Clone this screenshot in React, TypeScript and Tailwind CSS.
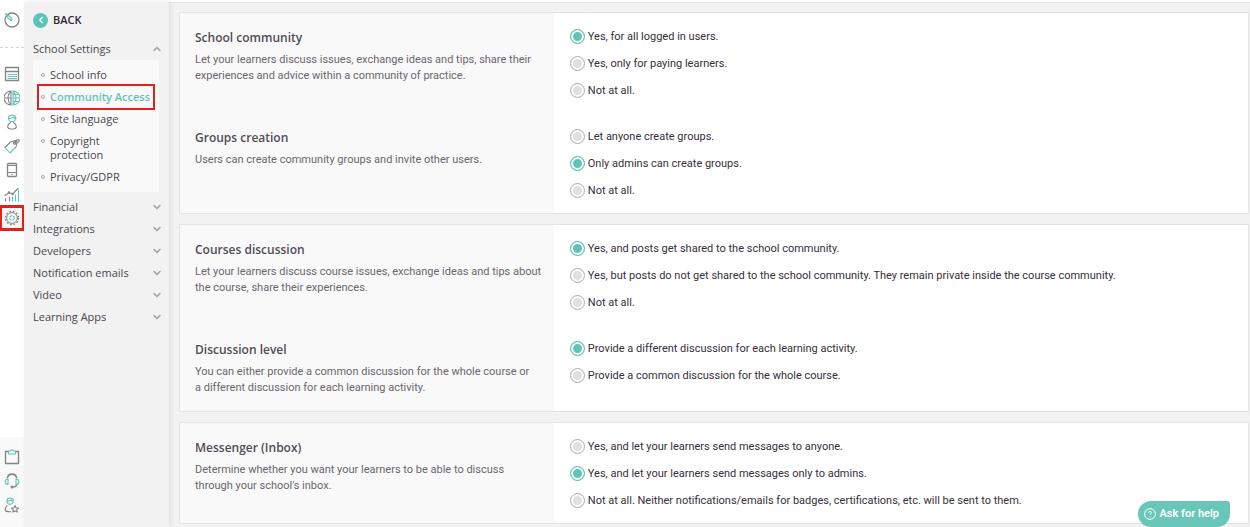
import { useState } from "react";
import type { ReactNode } from "react";
import { ChevronDown, ChevronLeft, ChevronUp } from "lucide-react";

const GRAY = "#858388";
const TEAL = "#5fc4b6";

function RailIcon({ children }: { children: ReactNode }) {
  return (
    <svg
      className="size-4"
      viewBox="0 0 16 16"
      fill="none"
      stroke={GRAY}
      strokeWidth="1.1"
      strokeLinecap="round"
      strokeLinejoin="round"
      aria-hidden="true"
    >
      {children}
    </svg>
  );
}

const railItems = [
  {
    label: "Courses",
    icon: (
      <RailIcon>
        <path d="M1.5 1.5h13v13h-13zM1.5 5.5h13" strokeWidth="1.3" />
        <path d="M4 8.500h8.500M4 10.500h8.500M4 12.500h8.500" stroke={TEAL} />
      </RailIcon>
    ),
  },
  {
    label: "Website",
    icon: (
      <RailIcon>
        <path d="M7 1a7 7 0 0 0 0 14M7 1C5 3 4 5.300 4 8s1 5 3 7M7 1v14M1 8h6" />
        <path
          d="M9 1a7 7 0 0 1 0 14M9 1c2 2 3 4.300 3 7s-1 5-3 7M9 1v14M9 8h6M9 4.500h4.500M9 11.500h4.500"
          stroke={TEAL}
        />
      </RailIcon>
    ),
  },
  {
    label: "Users",
    icon: (
      <RailIcon>
        <path d="M6.500 8.500C4.700 9.500 3.700 11 3.700 12.700c0 1.500 1.500 2.300 4.300 2.300s4.300-.8 4.300-2.300c0-1.700-1-3.200-2.800-4.200" />
        <path
          d="M4.500 4.200C4.500 2.300 6 1 8 1s3.500 1.300 3.500 3.200S10 7.600 8 7.600 4.500 6.100 4.500 4.200zM4.500 4.500c2.500.3 4-.3 5-1.500.3 1 1 1.500 2.800 1.500"
          stroke={TEAL}
        />
      </RailIcon>
    ),
  },
  {
    label: "Marketing",
    icon: (
      <RailIcon>
        <path d="M1 9.500 6.500 4l5-1.500 1.500 1-.5 4.500-2 2.500" />
        <path d="M1 9.500 6 15l5.500-5.500" stroke={TEAL} />
        <circle cx="10.5" cy="5" r="1.3" />
        <path d="M10.500 5c1-3 3.500-4 4.500-3s-1 3-3.500 3.500" />
      </RailIcon>
    ),
  },
  {
    label: "Mobile app",
    icon: (
      <RailIcon>
        <rect x="3.5" y="1.5" width="9" height="13" rx="1" strokeWidth="1.3" />
        <path d="M3.500 3.500h9M3.500 10.500h9" />
        <path d="M7.500 12.500h1" stroke={TEAL} />
      </RailIcon>
    ),
  },
  {
    label: "Reports",
    icon: (
      <RailIcon>
        <path d="M1 9.500 5 6.500l3.500 1.500L14 2.500M1.500 12.500V15M5.500 11v4" />
        <path d="M8.500 11v4M11.500 9v6M14.500 4v11" stroke={TEAL} />
        <circle cx="5" cy="6.5" r=".7" />
        <circle cx="8.5" cy="8" r=".7" />
      </RailIcon>
    ),
  },
  {
    label: "Settings",
    current: true,
    icon: (
      <RailIcon>
        <circle cx="8" cy="8" r="5.4" strokeWidth="0.9" />
        <circle cx="8" cy="8" r="6.5" strokeWidth="1.4" strokeDasharray="1.7 1.7" strokeLinecap="butt" />
        <circle cx="8" cy="8" r="2.3" stroke={TEAL} strokeDasharray="2.8 0.8" strokeLinecap="butt" />
      </RailIcon>
    ),
  },
];

const railBottom = [
  {
    label: "Tasks",
    icon: (
      <RailIcon>
        <path d="M4.500 2.500h-3v12h13v-12h-3" strokeWidth="1.3" />
        <path d="M4.500 2h2c0-1.500 3-1.500 3 0h2v3h-7z" stroke={TEAL} />
      </RailIcon>
    ),
  },
  {
    label: "Support",
    icon: (
      <RailIcon>
        <path d="M3.500 4.500c1-4.500 8-4.500 9 0" strokeWidth="1.6" />
        <path d="M13 11.500c-.5 1.500-2 2.500-4 2.500" />
        <circle cx="8" cy="14" r="1" fill={GRAY} />
        <path d="M4 6v5.500C.3 11.500.3 6 4 6zM12 6v5.500c3.700 0 3.700-5.500 0-5.500z" stroke={TEAL} />
      </RailIcon>
    ),
  },
  {
    label: "Account",
    icon: (
      <RailIcon>
        <path d="M3 8.500C1.800 10 1 12 1.300 13.500c.2.800 2 1.200 5.200 1.200" />
        <path d="m11 8.500 1 2.200 2.500.3-1.800 1.700.5 2.400L11 14l-2.200 1.100.5-2.400L7.500 11l2.500-.3z" />
        <path
          d="M2.800 3.800C2.800 2 4.300 1 6 1s3.300 1 3.300 2.800S8 7.300 6.200 7.300 2.800 5.700 2.800 3.800zM3 4c2 .3 3.500-.3 4.200-1.300C7.500 3.500 8 4 9.300 4"
          stroke={TEAL}
        />
      </RailIcon>
    ),
  },
];

const settingsLinks = ["School info", "Community Access", "Site language", "Copyright protection", "Privacy/GDPR"];

const closedMenus = ["Financial", "Integrations", "Developers", "Notification emails", "Video", "Learning Apps"];

type Setting = {
  id: string;
  title: string;
  text: string;
  options: string[];
  selected: number;
};

const cards: Setting[][] = [
  [
    {
      id: "community",
      title: "School community",
      text: "Let your learners discuss issues, exchange ideas and tips, share their experiences and advice within a community of practice.",
      options: ["Yes, for all logged in users.", "Yes, only for paying learners.", "Not at all."],
      selected: 0,
    },
    {
      id: "groups",
      title: "Groups creation",
      text: "Users can create community groups and invite other users.",
      options: ["Let anyone create groups.", "Only admins can create groups.", "Not at all."],
      selected: 1,
    },
  ],
  [
    {
      id: "courses",
      title: "Courses discussion",
      text: "Let your learners discuss course issues, exchange ideas and tips about the course, share their experiences.",
      options: [
        "Yes, and posts get shared to the school community.",
        "Yes, but posts do not get shared to the school community. They remain private inside the course community.",
        "Not at all.",
      ],
      selected: 0,
    },
    {
      id: "level",
      title: "Discussion level",
      text: "You can either provide a common discussion for the whole course or a\u00a0different discussion for each learning activity.",
      options: [
        "Provide a different discussion for each learning activity.",
        "Provide a common discussion for the whole course.",
      ],
      selected: 0,
    },
  ],
  [
    {
      id: "messenger",
      title: "Messenger (Inbox)",
      text: "Determine whether you want your learners to be able to discuss through\u00a0your school's inbox.",
      options: [
        "Yes, and let your learners send messages to anyone.",
        "Yes, and let your learners send messages only to admins.",
        "Not at all. Neither notifications/emails for badges, certifications, etc. will be sent to them.",
      ],
      selected: 1,
    },
  ],
];

function IconRail() {
  return (
    <nav aria-label="Main" className="flex w-6 shrink-0 flex-col justify-between bg-white">
      <div className="flex flex-col items-center">
        <button aria-label="Dashboard" className="mt-[6px] flex h-6 items-center">
          <RailIcon>
            <circle cx="8" cy="8" r="7" strokeWidth="1.3" />
            <path d="M1.500 1.500 4 6l3 2.500L8 8l-.5-1.500-3-3z" stroke={TEAL} />
          </RailIcon>
        </button>
        <div className="mt-[15px] mb-[14px] w-full border-t border-dashed border-[#d5d5d5]" />
        {railItems.map((item) => (
          <button
            key={item.label}
            aria-label={item.label}
            className={
              item.current
                ? "flex h-6 w-full items-center justify-center bg-[#f5f5f5] outline-3 -outline-offset-2 outline-[#e51e1e]"
                : "flex h-6 w-full items-center justify-center"
            }
          >
            {item.icon}
          </button>
        ))}
      </div>
      <div className="flex flex-col items-center bg-[#f9f9f9] pt-2 pb-[10px]">
        {railBottom.map((item) => (
          <button key={item.label} aria-label={item.label} className="flex h-6 items-center">
            {item.icon}
          </button>
        ))}
      </div>
    </nav>
  );
}

function SettingsMenu() {
  return (
    <aside className="w-[145px] shrink-0 bg-[#f2f2f2] pr-[10px] pl-[9px] text-[11px] font-medium text-[#4b474e] shadow-[2px_0_5px_rgba(0,0,0,0.08)]">
      <button className="mt-2 flex h-5 items-center gap-[5px] font-semibold text-[#2d2830]">
        <span className="flex size-[15px] items-center justify-center rounded-full bg-[#5fc4b6] text-white">
          <ChevronLeft className="size-[10px]" strokeWidth={3} />
        </span>
        BACK
      </button>
      <button className="mt-2 flex h-[22px] w-full items-center justify-between">
        School Settings
        <ChevronUp className="-mr-1 size-3 text-[#a3a1a5]" strokeWidth={3} />
      </button>
      <ul className="mb-1 bg-[#f9f9f9] py-1">
        {settingsLinks.map((link) => (
          <li
            key={link}
            className={
              link === "Community Access"
                ? "mx-[6px] flex gap-[5px] py-1 pl-[2px] font-semibold text-[#5fc4b6] outline-2 outline-[#e51e1e]"
                : "mx-[6px] flex gap-[5px] py-1 pl-[2px]"
            }
          >
            <span className="mt-[5px] size-1 shrink-0 rounded-full border border-[#aaa8ac]" />
            <a href="#" className={link === "Copyright protection" ? "w-20 leading-[14px]" : "leading-[14px] whitespace-nowrap"}>
              {link}
            </a>
          </li>
        ))}
      </ul>
      {closedMenus.map((menu) => (
        <button key={menu} className="flex h-[22px] w-full items-center justify-between">
          {menu}
          <ChevronDown className="-mr-1 size-3 text-[#a3a1a5]" strokeWidth={3} />
        </button>
      ))}
    </aside>
  );
}

function SettingRow({ setting }: { setting: Setting }) {
  const [value, setValue] = useState(setting.selected);

  return (
    <fieldset className="flex" aria-labelledby={setting.id}>
      <div className="w-[35%] bg-[#f9f9f9] pt-[15px] pr-3 pb-[15px] pl-[15px]">
        <h2 id={setting.id} className="text-xs leading-5 font-semibold text-[#514c55]">
          {setting.title}
        </h2>
        <p className="mt-1 font-['Roboto',sans-serif] text-[11px] leading-4 text-[#6a666d]">{setting.text}</p>
      </div>
      <div className="flex flex-1 flex-col gap-3 px-4 pt-4 pb-[15px] font-['Roboto',sans-serif]">
        {setting.options.map((option, i) => (
          <label key={option} className="flex h-[15px] items-center gap-[3px] text-[11px] text-[#352f3a]">
            <input
              type="radio"
              name={setting.id}
              checked={value === i}
              onChange={() => setValue(i)}
              className="size-[15px] shrink-0 appearance-none rounded-full border border-[#b2b0b4] bg-[#e0e0e0] shadow-[inset_0_0_0_2px_#fff] checked:border-[#5fc4b6] checked:bg-[#5fc4b6]"
            />
            <span className="pt-0.5">{option}</span>
          </label>
        ))}
      </div>
    </fieldset>
  );
}

export default function App() {
  return (
    <div className="flex min-h-screen flex-col bg-[#f2f2f2] font-['Open_Sans',sans-serif]">
      <header className="h-[3px] border-b border-[#e4e4e4] bg-white" />
      <div className="-mt-px flex flex-1">
        <IconRail />
        <SettingsMenu />
        <main className="flex flex-1 flex-col gap-[10px] pt-[10px] pr-px pl-[10px]">
          {cards.map((card) => (
            <section key={card[0].id} className="border border-[#e4e4e4] bg-white">
              {card.map((setting) => (
                <SettingRow key={setting.id} setting={setting} />
              ))}
            </section>
          ))}
        </main>
      </div>
      <button className="fixed right-5 bottom-0 flex h-[26px] items-center gap-1 rounded-[13px] rounded-tr-[3px] bg-[#68c7b9] pr-[11px] pl-[6px] font-['Roboto',sans-serif] text-[11px] font-semibold text-white">
        <svg className="size-3" viewBox="0 0 12 12" fill="none" stroke="currentColor" aria-hidden="true">
          <circle cx="6" cy="6" r="5.4" />
          <path d="M4.500 4.700C4.500 3 7.500 3 7.500 4.700 7.500 5.800 6 5.700 6 7M6 8.300v.9" />
        </svg>
        Ask for help
      </button>
    </div>
  );
}
